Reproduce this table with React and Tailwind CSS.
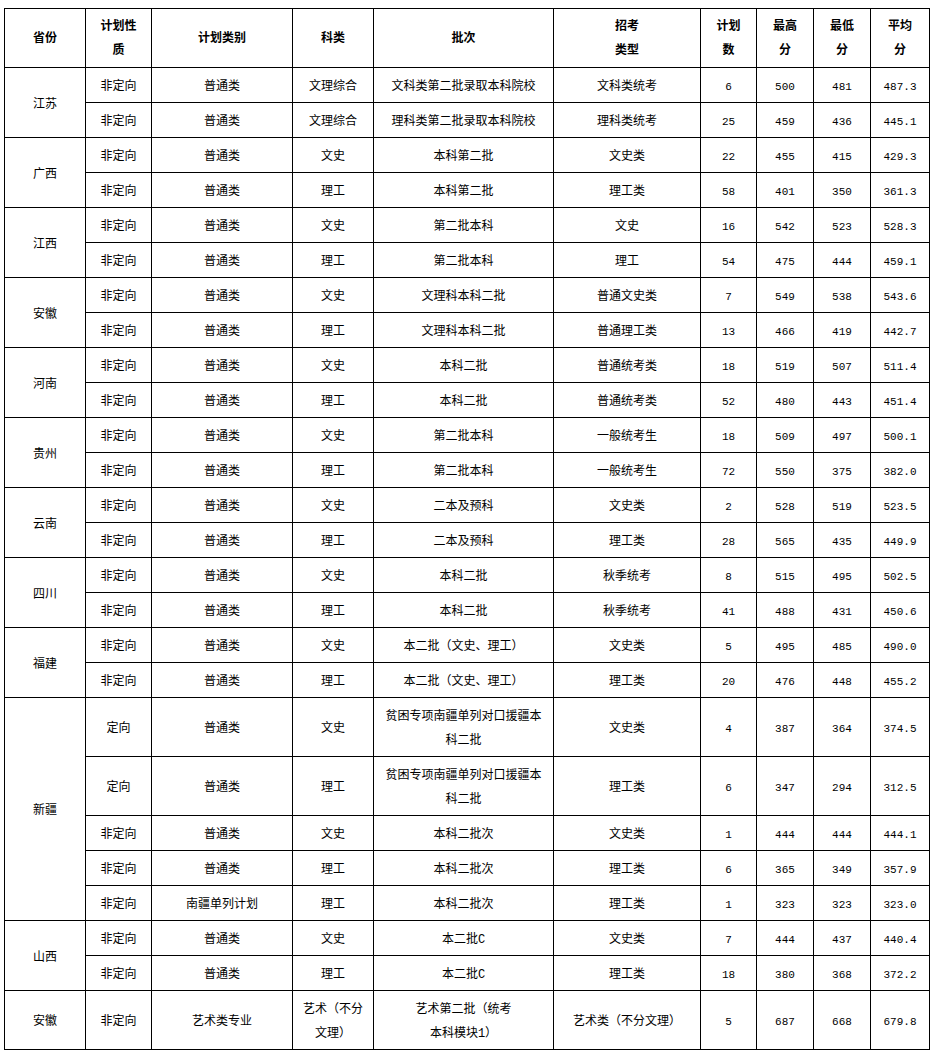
import React from 'react'

const groups = [
  ['江苏', [
    ['非定向', '普通类', '文理综合', '文科类第二批录取本科院校', '文科类统考', '6', '500', '481', '487.3'],
    ['非定向', '普通类', '文理综合', '理科类第二批录取本科院校', '理科类统考', '25', '459', '436', '445.1'],
  ]],
  ['广西', [
    ['非定向', '普通类', '文史', '本科第二批', '文史类', '22', '455', '415', '429.3'],
    ['非定向', '普通类', '理工', '本科第二批', '理工类', '58', '401', '350', '361.3'],
  ]],
  ['江西', [
    ['非定向', '普通类', '文史', '第二批本科', '文史', '16', '542', '523', '528.3'],
    ['非定向', '普通类', '理工', '第二批本科', '理工', '54', '475', '444', '459.1'],
  ]],
  ['安徽', [
    ['非定向', '普通类', '文史', '文理科本科二批', '普通文史类', '7', '549', '538', '543.6'],
    ['非定向', '普通类', '理工', '文理科本科二批', '普通理工类', '13', '466', '419', '442.7'],
  ]],
  ['河南', [
    ['非定向', '普通类', '文史', '本科二批', '普通统考类', '18', '519', '507', '511.4'],
    ['非定向', '普通类', '理工', '本科二批', '普通统考类', '52', '480', '443', '451.4'],
  ]],
  ['贵州', [
    ['非定向', '普通类', '文史', '第二批本科', '一般统考生', '18', '509', '497', '500.1'],
    ['非定向', '普通类', '理工', '第二批本科', '一般统考生', '72', '550', '375', '382.0'],
  ]],
  ['云南', [
    ['非定向', '普通类', '文史', '二本及预科', '文史类', '2', '528', '519', '523.5'],
    ['非定向', '普通类', '理工', '二本及预科', '理工类', '28', '565', '435', '449.9'],
  ]],
  ['四川', [
    ['非定向', '普通类', '文史', '本科二批', '秋季统考', '8', '515', '495', '502.5'],
    ['非定向', '普通类', '理工', '本科二批', '秋季统考', '41', '488', '431', '450.6'],
  ]],
  ['福建', [
    ['非定向', '普通类', '文史', '本二批（文史、理工）', '文史类', '5', '495', '485', '490.0'],
    ['非定向', '普通类', '理工', '本二批（文史、理工）', '理工类', '20', '476', '448', '455.2'],
  ]],
  ['新疆', [
    ['定向', '普通类', '文史', ['贫困专项南疆单列对口援疆本', '科二批'], '文史类', '4', '387', '364', '374.5'],
    ['定向', '普通类', '理工', ['贫困专项南疆单列对口援疆本', '科二批'], '理工类', '6', '347', '294', '312.5'],
    ['非定向', '普通类', '文史', '本科二批次', '文史类', '1', '444', '444', '444.1'],
    ['非定向', '普通类', '理工', '本科二批次', '理工类', '6', '365', '349', '357.9'],
    ['非定向', '南疆单列计划', '理工', '本科二批次', '理工类', '1', '323', '323', '323.0'],
  ]],
  ['山西', [
    ['非定向', '普通类', '文史', '本二批C', '文史类', '7', '444', '437', '440.4'],
    ['非定向', '普通类', '理工', '本二批C', '理工类', '18', '380', '368', '372.2'],
  ]],
  ['安徽', [
    ['非定向', '艺术类专业', ['艺术（不分', '文理）'], ['艺术第二批（统考', '本科模块1）'], '艺术类（不分文理）', '5', '687', '668', '679.8'],
  ]],
]

const headers = [['省份'], ['计划性', '质'], ['计划类别'], ['科类'], ['批次'], ['招考', '类型'], ['计划', '数'], ['最高', '分'], ['最低', '分'], ['平均', '分']]

function Lines({ v }) {
  if (!Array.isArray(v)) return v
  return v.map((s, i) => (
    <React.Fragment key={i}>
      {i > 0 && <br />}
      {s}
    </React.Fragment>
  ))
}

const cell = 'border border-black text-center align-middle px-0 pb-0'

export default function App() {
  return (
    <div className="min-h-[1061px] bg-white pt-[8px] pl-[4px] text-black text-[12px] leading-[24px]" style={{ fontFamily: '"Liberation Mono", "Noto Sans CJK SC", monospace' }}>
      <table className="table-fixed border-collapse w-[925px]">
        <colgroup>
          <col className="w-[81px]" />
          <col className="w-[66px]" />
          <col className="w-[141px]" />
          <col className="w-[81px]" />
          <col className="w-[180px]" />
          <col className="w-[147px]" />
          <col className="w-[56px]" />
          <col className="w-[57px]" />
          <col className="w-[57px]" />
          <col className="w-[59px]" />
        </colgroup>
        <thead>
          <tr className="h-[59px]">
            {headers.map((h, i) => (
              <th key={i} className={cell + ' pt-[2px] font-bold'}>
                <Lines v={h} />
              </th>
            ))}
          </tr>
        </thead>
        <tbody>
          {groups.map(([prov, rows], gi) =>
            rows.map((r, ri) => {
              const tall = r.some(v => Array.isArray(v))
              return (
                <tr key={gi + '-' + ri} className={tall ? 'h-[59px]' : 'h-[35px]'}>
                  {ri === 0 && (
                    <td rowSpan={rows.length} className={cell + ' pt-[4px]'}>{prov}</td>
                  )}
                  {r.map((v, ci) => (
                    <td key={ci} className={cell + ' pt-[4px]' + (ci >= 5 ? ' text-[11px]' : '')}>
                      <Lines v={v} />
                    </td>
                  ))}
                </tr>
              )
            })
          )}
        </tbody>
      </table>
    </div>
  )
}
